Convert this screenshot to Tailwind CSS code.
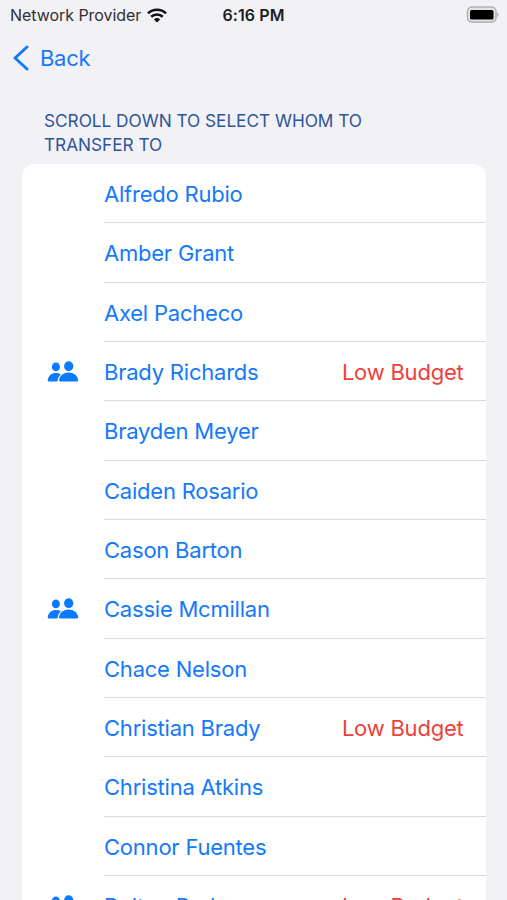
<!DOCTYPE html>
<html lang="en">
<head>
  <meta charset="UTF-8" />
  <meta name="viewport" content="width=device-width, initial-scale=1.0"/>
  <title>Transfer</title>
  <script src="https://cdn.jsdelivr.net/npm/@tailwindcss/browser@4"></script>
</head>
<body class="bg-[#f1f1f6] font-['Inter','Liberation_Sans',sans-serif] h-[900px] overflow-hidden">
  <!-- shared icon -->
  <svg class="hidden">
    <symbol id="people" viewBox="0 0 32 22">
      <ellipse cx="8.9" cy="5.9" rx="4" ry="4.3"/>
      <path d="M2 20.500C1 20.500.6 19.700.8 18.700 1.500 14.600 4.800 12 8.900 12c2 0 3.600.5 4.900 1.400-2.100 1.700-3.100 4-3.300 7.100z"/>
      <ellipse cx="21.700" cy="5.200" rx="4.600" ry="4.900"/>
      <path d="M13.500 20.500c-1.200 0-1.600-.7-1.400-1.700.8-4.300 4.600-7.200 9.600-7.200s8.700 2.900 9.500 7.200c.2 1-.2 1.700-1.400 1.700z"/>
    </symbol>
  </svg>

  <header class="grid grid-cols-3 items-center h-[30px] pl-[10px] pr-[7px]">
    <div class="flex items-center gap-[6px] text-[16px] tracking-[-0.050px] text-[#303033] whitespace-nowrap">
      <span>Network Provider</span>
      <svg class="w-5 h-[15px] shrink-0" viewBox="0 0 20 15" fill="none" stroke="#111" stroke-width="2.600">
        <path d="M1 5.400a13 13 0 0 1 18 0M4.200 8.800a8.300 8.300 0 0 1 11.600 0"/>
        <path d="M10 14.500 6.900 11.400a4.500 4.500 0 0 1 6.200 0z" fill="#111" stroke="none"/>
      </svg>
    </div>
    <div class="text-center pr-[3px] text-[16px] font-semibold tracking-[0.100px] text-[#1c1c1e]">6:16 PM</div>
    <div class="flex justify-end">
      <svg class="w-[34px] h-[18px]" viewBox="0 0 34 18">
        <rect x="1.500" y="1" width="28.500" height="15" rx="4.500" fill="#e4e4e6" stroke="#b0b0b3" stroke-width="1.500"/>
        <rect x="4" y="4" width="23.500" height="9.500" rx="1.500" fill="#000"/>
        <path d="M31.300 6.500c1.800.8 1.800 3.700 0 4.500z" fill="#a5a5a8"/>
      </svg>
    </div>
  </header>

  <nav class="flex items-center h-[56px] pl-[13px] gap-[11px] text-[#1479fb]">
    <svg class="w-4 h-[26px]" viewBox="0 0 16 26" fill="none" stroke="currentColor" stroke-width="3" stroke-linecap="round" stroke-linejoin="round">
      <path d="M14 2 2 13l12 11"/>
    </svg>
    <span class="text-[22px] tracking-[-0.300px]">Back</span>
  </nav>

  <main class="pl-[22px] pr-[21.500px] pt-[23px]">
    <h1 class="pl-[22px] h-[55px] text-[17.250px] leading-6 tracking-[-0.030px] text-[#2f5597] whitespace-nowrap">SCROLL DOWN TO SELECT WHOM TO<br>TRANSFER TO</h1>
    <ul class="bg-white rounded-t-[13px] text-[22px] tracking-[-0.220px] text-[#1479fb] whitespace-nowrap">
      <li class="flex h-[59.330px] pl-[82px]"><div class="flex-1 flex items-center pt-[3px] border-b border-[#dadadd]">Alfredo Rubio</div></li>
      <li class="flex h-[59.330px] pl-[82px]"><div class="flex-1 flex items-center pt-[3px] border-b border-[#dadadd]">Amber Grant</div></li>
      <li class="flex h-[59.330px] pl-[82px]"><div class="flex-1 flex items-center pt-[3px] border-b border-[#dadadd]">Axel Pacheco</div></li>
      <li class="flex h-[59.330px]">
        <div class="w-[82px] pl-[25px] flex items-center"><svg class="w-8 h-[22px]" fill="#0a7aff"><use href="#people"/></svg></div>
        <div class="flex-1 flex items-center justify-between pt-[3px] pr-[22px] border-b border-[#dadadd]"><span>Brady Richards</span><span class="text-[#ee4038]">Low Budget</span></div>
      </li>
      <li class="flex h-[59.330px] pl-[82px]"><div class="flex-1 flex items-center pt-[3px] border-b border-[#dadadd]">Brayden Meyer</div></li>
      <li class="flex h-[59.330px] pl-[82px]"><div class="flex-1 flex items-center pt-[3px] border-b border-[#dadadd]">Caiden Rosario</div></li>
      <li class="flex h-[59.330px] pl-[82px]"><div class="flex-1 flex items-center pt-[3px] border-b border-[#dadadd]">Cason Barton</div></li>
      <li class="flex h-[59.330px]">
        <div class="w-[82px] pl-[25px] flex items-center"><svg class="w-8 h-[22px]" fill="#0a7aff"><use href="#people"/></svg></div>
        <div class="flex-1 flex items-center pt-[3px] border-b border-[#dadadd]">Cassie Mcmillan</div>
      </li>
      <li class="flex h-[59.330px] pl-[82px]"><div class="flex-1 flex items-center pt-[3px] border-b border-[#dadadd]">Chace Nelson</div></li>
      <li class="flex h-[59.330px] pl-[82px]"><div class="flex-1 flex items-center justify-between pt-[3px] pr-[22px] border-b border-[#dadadd]"><span>Christian Brady</span><span class="text-[#ee4038]">Low Budget</span></div></li>
      <li class="flex h-[59.330px] pl-[82px]"><div class="flex-1 flex items-center pt-[3px] border-b border-[#dadadd]">Christina Atkins</div></li>
      <li class="flex h-[59.330px] pl-[82px]"><div class="flex-1 flex items-center pt-[3px] border-b border-[#dadadd]">Connor Fuentes</div></li>
      <li class="flex h-[59.330px]">
        <div class="w-[82px] pl-[25px] flex items-center"><svg class="w-8 h-[22px]" fill="#0a7aff"><use href="#people"/></svg></div>
        <div class="flex-1 flex items-center justify-between pt-[3px] pr-[22px] border-b border-[#dadadd]"><span>Dalton Parker</span><span class="text-[#ee4038]">Low Budget</span></div>
      </li>
    </ul>
  </main>
</body>
</html>
